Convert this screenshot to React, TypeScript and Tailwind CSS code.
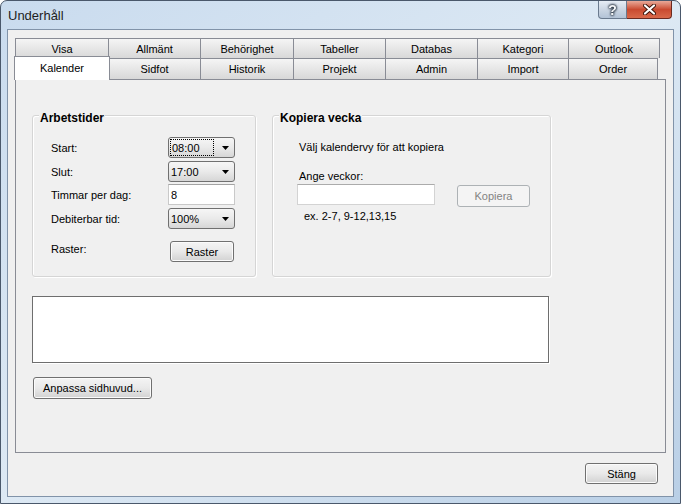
import React from 'react';

const row1 = [
  {label: 'Visa', w: 'w-[93px]'},
  {label: 'Allmänt', w: 'w-[92px]'},
  {label: 'Behörighet', w: 'w-[93px]'},
  {label: 'Tabeller', w: 'w-[92px]'},
  {label: 'Databas', w: 'w-[92px]'},
  {label: 'Kategori', w: 'w-[91px]'},
  {label: 'Outlook', w: 'w-[92px]'},
];

const row2 = [
  {label: 'Kalender', w: 'w-[93px]'},
  {label: 'Sidfot', w: 'w-[92px]'},
  {label: 'Historik', w: 'w-[93px]'},
  {label: 'Projekt', w: 'w-[92px]'},
  {label: 'Admin', w: 'w-[92px]'},
  {label: 'Import', w: 'w-[91px]'},
  {label: 'Order', w: 'w-[90px]'},
];

const btn =
  'flex items-center justify-center rounded-[3px] border border-[#707070] bg-linear-to-b from-[#f4f4f4] via-[#e9e9e9] to-[#d2d2d2] shadow-[inset_0_0_0_1px_#fbfbfb] text-[11px] leading-[14px] text-black';

function Arrow() {
  return (
    <svg width="7" height="4" viewBox="0 0 7 4" className="shrink-0">
      <polygon points="0,0 7,0 3.5,4" fill="#000" />
    </svg>
  );
}

function Combo({value, focused}: {value: string; focused?: boolean}) {
  return (
    <div className="flex h-[21px] w-[67px] items-center rounded-[3px] border border-[#707070] bg-linear-to-b from-[#f6f6f6] via-[#eaeaea] to-[#d6d6d6] pr-[5px]">
      {focused ? (
        <span className="ml-[1px] flex h-[17px] w-[44px] items-center border border-dotted border-black pl-[1px]">{value}</span>
      ) : (
        <span className="ml-[2px] w-[44px]">{value}</span>
      )}
      <span className="ml-auto">
        <Arrow />
      </span>
    </div>
  );
}

function Row({label, className, children}: {label: string; className?: string; children: React.ReactNode}) {
  return (
    <div className={'flex h-[21px] items-center ' + (className ?? '')}>
      <span className="w-[117px]">{label}</span>
      {children}
    </div>
  );
}

export default function App() {
  return (
    <div className="h-[504px] w-[681px] overflow-hidden rounded-t-[7px] border border-[#4a586b] bg-linear-to-br from-[#c9dbee] via-[#dde9f4] to-[#b9cfe6] font-['Liberation_Sans',Arial,sans-serif] text-[11px] leading-[14px] text-black">
      {/* Title bar */}
      <div className="flex h-[28px] items-start">
        <span className="pl-[7px] pt-[7px] text-[13px] leading-[16px] text-[#1e1e1e]">Underhåll</span>
        <div className="ml-auto mr-[8px] flex h-[18px]">
          <div className="flex w-[29px] items-center justify-center rounded-bl-[4px] border border-t-0 border-[#6a7a8e] bg-linear-to-b from-[#e6edf5] via-[#cbd6e3] to-[#b3c3d6]">
            <span className="text-[14px] font-bold leading-[14px] text-[#f4f6f8] drop-shadow-[0_0_1px_#1a2533] [filter:drop-shadow(0_0_1px_#1a2533)_drop-shadow(0_0_1px_#1a2533)]">?</span>
          </div>
          <div className="flex w-[45px] items-center justify-center rounded-br-[4px] border border-l-0 border-t-0 border-[#6b2a20] bg-linear-to-b from-[#e8a898] via-[#c94a30] to-[#d9694a]">
            <svg width="13" height="11" viewBox="0 0 13 11">
              <path d="M2 1.5 L11 9.5 M11 1.5 L2 9.5" stroke="#3a1208" strokeWidth="4" strokeLinecap="round" />
              <path d="M2 1.5 L11 9.5 M11 1.5 L2 9.5" stroke="#fff" strokeWidth="2.2" strokeLinecap="round" />
            </svg>
          </div>
        </div>
      </div>

      {/* Client area */}
      <div className="mx-[6px] flex h-[468px] flex-col border border-[#8193a9] bg-[#f0f0f0] pl-[7px] pt-[8px]">
        {/* Tabs */}
        <div className="flex h-[20px]">
          {row1.map((t, i) => (
            <div
              key={t.label}
              className={
                t.w +
                ' flex items-center justify-center border-l border-t border-[#898c95] bg-linear-to-b from-[#f5f5f5] to-[#d8d8d8] ' +
                (i === row1.length - 1 ? 'border-r' : '')
              }
            >
              {t.label}
            </div>
          ))}
        </div>
        <div className="flex h-[21px]">
          {row2.map((t, i) =>
            i === 0 ? (
              <div key={t.label} className={t.w + ' relative'}>
                <div className="absolute -bottom-px -left-px -right-[2px] -top-[2px] z-10 flex items-center justify-center border border-b-0 border-[#898c95] bg-white pb-[2px]">
                  {t.label}
                </div>
              </div>
            ) : (
              <div
                key={t.label}
                className={
                  t.w +
                  ' flex items-center justify-center border-l border-t border-[#898c95] bg-linear-to-b from-[#f5f5f5] to-[#d8d8d8] ' +
                  (i === row2.length - 1 ? 'border-r' : '')
                }
              >
                {t.label}
              </div>
            ),
          )}
        </div>

        {/* Tab panel */}
        <div className="flex h-[374px] w-[651px] flex-col border border-[#898c95] bg-[#f0f0f0] pl-[16px] pt-[35px]">
          <div className="flex gap-[16px]">
            {/* Arbetstider */}
            <div className="h-[162px] w-[224px] rounded-[3px] border border-[#d5d5d5] shadow-[inset_1px_1px_0_#ffffff,1px_1px_0_#ffffff]">
              <div className="-mt-[5px] ml-[6px] w-fit bg-[#f0f0f0] px-[1px] text-[12px] font-bold leading-[14px]">Arbetstider</div>
              <div className="mt-[12px] flex flex-col pl-[18px]">
                <Row label="Start:">
                  <Combo value="08:00" focused />
                </Row>
                <Row label="Slut:" className="mt-[3px]">
                  <Combo value="17:00" />
                </Row>
                <Row label="Timmar per dag:" className="mt-[2px]">
                  <div className="flex h-[21px] w-[67px] items-center border border-[#c9c9c9] border-t-[#a3a3a3] bg-white pl-[2px]">8</div>
                </Row>
                <Row label="Debiterbar tid:" className="mt-[3px]">
                  <Combo value="100%" />
                </Row>
                <div className="mt-[12px] flex items-start">
                  <span className="mt-[1px] w-[117px]">Raster:</span>
                  <div className={btn + ' ml-[2px] h-[21px] w-[64px]'}>Raster</div>
                </div>
              </div>
            </div>

            {/* Kopiera vecka */}
            <div className="h-[162px] w-[279px] rounded-[3px] border border-[#d5d5d5] shadow-[inset_1px_1px_0_#ffffff,1px_1px_0_#ffffff]">
              <div className="-mt-[5px] ml-[6px] w-fit bg-[#f0f0f0] px-[1px] text-[12px] font-bold leading-[14px]">Kopiera vecka</div>
              <div className="mt-[15px] flex flex-col pl-[26px]">
                <span>Välj kalendervy för att kopiera</span>
                <span className="mt-[15px]">Ange veckor:</span>
                <div className="-ml-[2px] mt-[1px] flex items-start">
                  <div className="h-[21px] w-[138px] border border-[#d3d3d3] border-t-[#ababab] bg-white" />
                  <div className="ml-[22px] mt-[1px] flex h-[22px] w-[73px] items-center justify-center rounded-[3px] border border-[#adb2b5] bg-[#f4f4f4] text-[#838383]">
                    Kopiera
                  </div>
                </div>
                <span className="ml-[5px] mt-[2px]">ex. 2-7, 9-12,13,15</span>
              </div>
            </div>
          </div>

          <div className="mt-[19px] h-[67px] w-[517px] border border-[#6e6e6e] bg-white shadow-[1px_1px_0_#ffffff]" />

          <div className={btn + ' mt-[14px] h-[22px] w-[119px] ml-[1px]'}>Anpassa sidhuvud...</div>
        </div>

        <div className="mt-[10px] flex justify-end pr-[15px]">
          <div className={btn + ' h-[21px] w-[73px]'}>Stäng</div>
        </div>
      </div>
    </div>
  );
}
